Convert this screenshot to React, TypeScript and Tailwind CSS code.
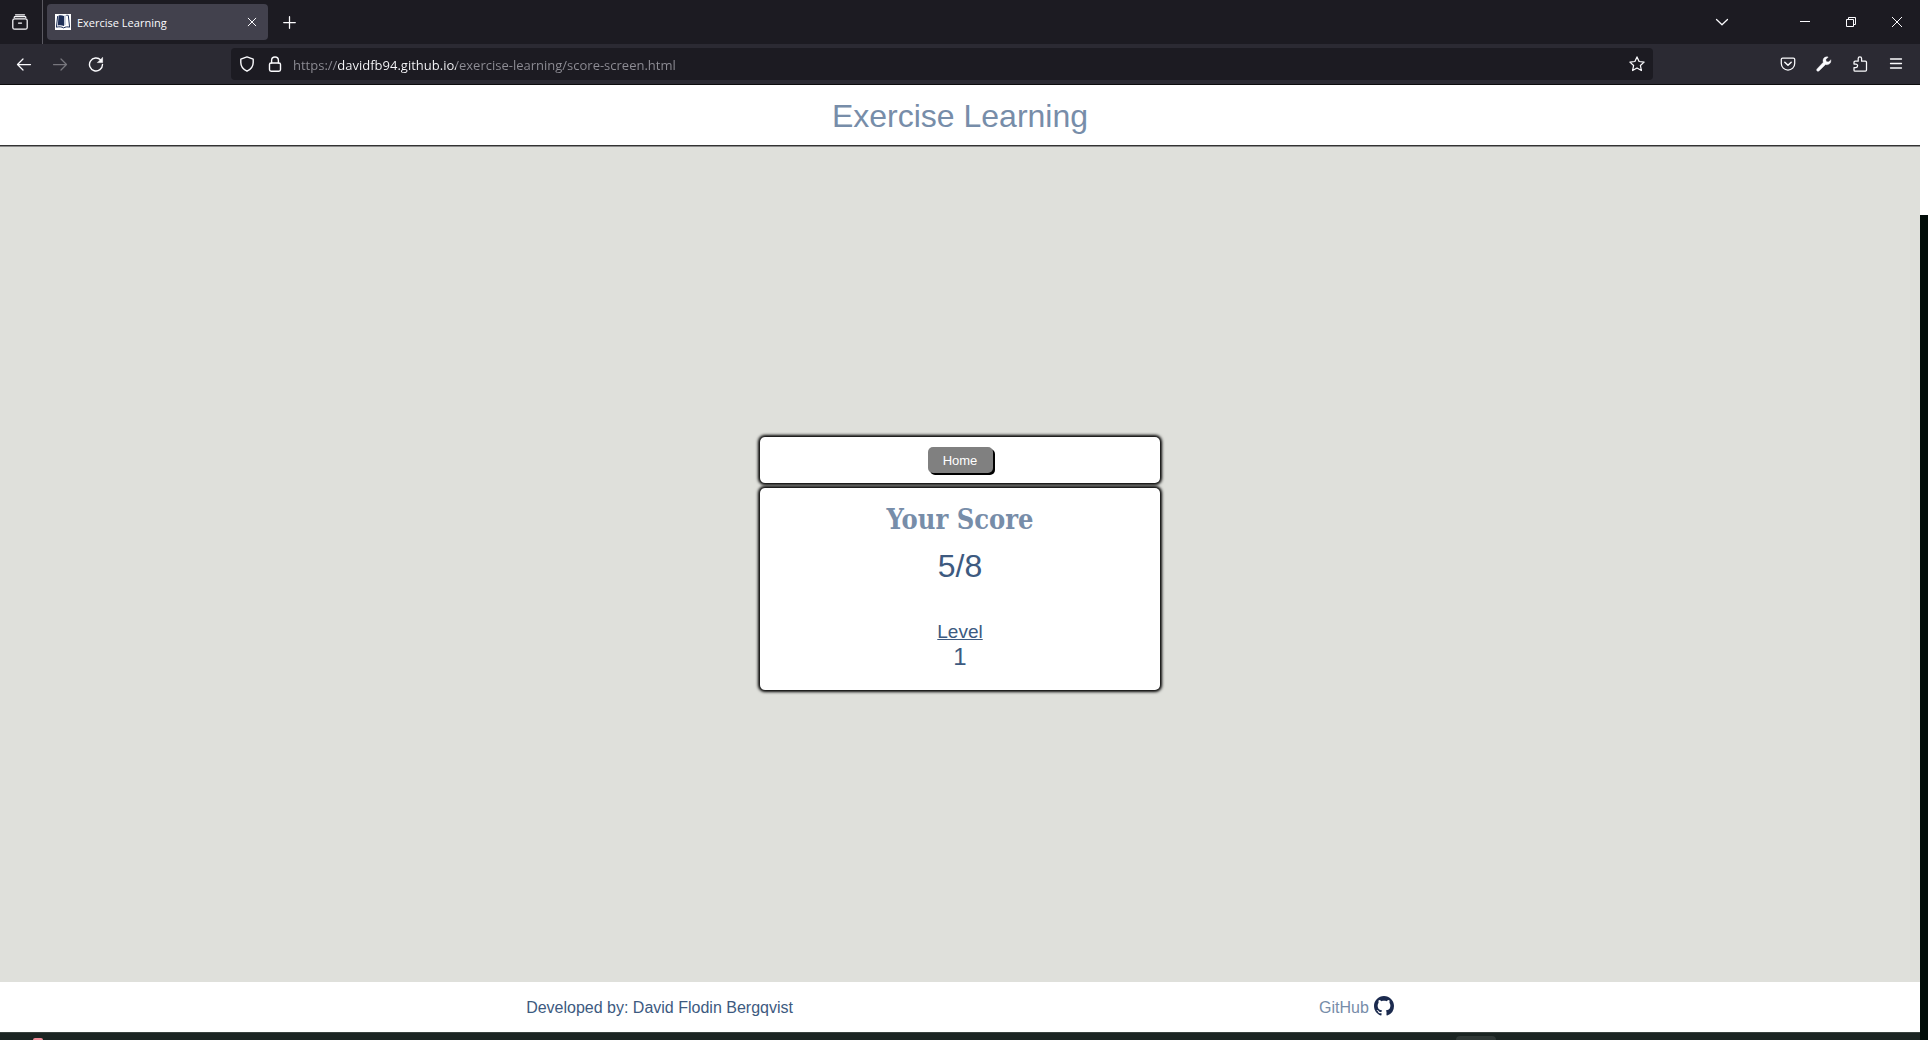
import type { ReactNode } from "react";

type IconProps = { children: ReactNode; className?: string };

function Icon({ children, className = "size-4" }: IconProps) {
  return (
    <svg
      viewBox="0 0 16 16"
      className={`${className} shrink-0`}
      fill="none"
      stroke="currentColor"
      strokeWidth="1.25"
      strokeLinecap="round"
      strokeLinejoin="round"
      aria-hidden="true"
    >
      {children}
    </svg>
  );
}

function ToolButton({ label, children, className = "w-9" }: { label: string; children: ReactNode; className?: string }) {
  return (
    <button type="button" aria-label={label} className={`${className} flex h-8 shrink-0 items-center justify-center`}>
      {children}
    </button>
  );
}

function Favicon() {
  return (
    <svg viewBox="0 0 16 16" className="size-4 shrink-0" aria-hidden="true">
      <path fill="#fff" d="M0 0h16v16H0z" />
      <path fill="#1e2f57" d="M3.600 1.500C5.200 1 7.400 1.100 9 2v10c-1.900-.9-4.300-1-6.200-.5z" />
      <path fill="#c3cad8" d="M9 2c.6-.5 1.200-.8 1.800-.9v10c-.7.100-1.300.4-1.800.9z" />
      <path fill="none" stroke="#1e2f57" strokeWidth="1" d="M11.300 1.300c.8-.1 1.400 0 2 .2l1.300 11.700c-2.200-.6-4.200-.4-5.900.7-2.100-1.200-4.800-1.400-7.300-.7L2.700 2" />
    </svg>
  );
}

function TabBar() {
  return (
    <div className="flex h-11 items-center bg-[#1c1b22]">
      <div className="flex h-full w-[43px] shrink-0 items-center border-r border-[#5b5a62] pl-3">
        <button type="button" aria-label="View recent browsing">
          <Icon>
            <path d="M3.500 .8h9M2.200 3.500C2.200 3 2.600 2.700 3.200 2.700h9.600c.6 0 1 .3 1 .8" />
            <rect x=".8" y="4.800" width="14.400" height="10.400" rx="1.800" />
            <path d="M6.500 9h3" />
          </Icon>
        </button>
      </div>
      <div className="ml-1 flex h-9 w-[221px] items-center gap-1.5 rounded bg-[#42414d] pr-2 pl-2">
        <Favicon />
        <span className="flex-1 pt-0.5 text-[11px] leading-4 whitespace-nowrap">Exercise Learning</span>
        <button type="button" aria-label="Close tab">
          <Icon>
            <path strokeWidth="1" d="M4.200 4.200l7.600 7.600M11.800 4.200l-7.600 7.600" />
          </Icon>
        </button>
      </div>
      <ToolButton label="New tab" className="ml-1 w-9">
        <Icon>
          <path d="M7.500 2.700v11.600M1.700 8.500h11.600" />
        </Icon>
      </ToolButton>
      <div className="flex-1" />
      <ToolButton label="List all tabs" className="mr-[42px] w-9">
        <Icon>
          <path d="M2.500 5.500L8 10.800l5.500-5.300" />
        </Icon>
      </ToolButton>
      <ToolButton label="Minimize" className="w-[46px]">
        <Icon>
          <path strokeLinecap="butt" strokeWidth="1" d="M3 7.500h10" />
        </Icon>
      </ToolButton>
      <ToolButton label="Restore" className="w-[46px]">
        <Icon>
          <path strokeLinecap="butt" strokeLinejoin="miter" strokeWidth="1" d="M3.500 5.500h7v7h-7zM5.500 5.500v-2h7v7h-2" />
        </Icon>
      </ToolButton>
      <ToolButton label="Close" className="w-[46px]">
        <Icon>
          <path strokeLinecap="butt" strokeWidth="1" d="M3 3l10 10M13 3L3 13" />
        </Icon>
      </ToolButton>
    </div>
  );
}

function NavBar() {
  return (
    <div className="flex h-[41px] items-center border-b border-[#0c0c0d] bg-[#2b2a33] pl-1.5">
      <ToolButton label="Back">
        <Icon>
          <path d="M14.500 8.500h-13M7 3L1.500 8.500 7 14" />
        </Icon>
      </ToolButton>
      <ToolButton label="Forward">
        <Icon className="size-4 text-[#77767d]">
          <path d="M1.500 8.500h13M9 3l5.500 5.500L9 14" />
        </Icon>
      </ToolButton>
      <ToolButton label="Reload">
        <Icon>
          <path strokeWidth="1.400" d="M12.800 4.100A6.500 6.500 0 1 0 14.500 8.500" />
          <path fill="currentColor" strokeWidth=".6" d="M14.600 1.700v4.900H9.700z" />
        </Icon>
      </ToolButton>
      <div className="mx-[117px] flex h-8 flex-1 items-center rounded bg-[#1c1b22] pr-2 pl-2">
        <button type="button" aria-label="Tracking protection">
          <Icon>
            <path strokeWidth="1.400" d="M8 .9l6.200 2.300v3.300c0 4-2.600 7-6.200 8.700-3.600-1.700-6.200-4.700-6.200-8.700V3.200z" />
          </Icon>
        </button>
        <button type="button" aria-label="Site information" className="ml-3">
          <Icon>
            <path strokeWidth="1.400" d="M4.600 7V4.400a3.400 3.400 0 0 1 6.800 0V7" />
            <rect strokeWidth="1.400" x="2.500" y="7" width="11" height="8.200" rx="1.600" />
          </Icon>
        </button>
        <input
          aria-label="Address"
          className="ml-2.5 min-w-0 flex-1 bg-[linear-gradient(to_right,#8f8e96_45px,#fbfbfe_45px,#fbfbfe_163px,#8f8e96_163px)] bg-clip-text pt-1 text-[13px] text-transparent outline-none"
          defaultValue="https://davidfb94.github.io/exercise-learning/score-screen.html"
          spellCheck={false}
        />
        <button type="button" aria-label="Bookmark this page">
          <Icon>
            <path d="M8 .9l2.100 4.600 5 .6-3.700 3.400 1 5L8 12l-4.400 2.500 1-5L.9 6.100l5-.6z" />
          </Icon>
        </button>
      </div>
      <div className="flex pr-1.5">
        <ToolButton label="Save to Pocket">
          <Icon>
            <path d="M2.600 2h10.800c.8 0 1.300.5 1.300 1.300v4.300a6.700 6.400 0 0 1-13.400 0V3.300c0-.8.500-1.300 1.300-1.300z" />
            <path strokeWidth="1.500" d="M4.800 6.200L8 9.200l3.200-3" />
          </Icon>
        </ToolButton>
        <ToolButton label="Developer tools">
          <Icon>
            <path
              fill="currentColor"
              strokeWidth=".4"
              d="M14.800 4.200l-2.600 1.900-2-.6-.4-2L12.200 1C9.500.2 7 1.900 7 4.500c0 .7.100 1.200.3 1.700L1 12.900c-1.200 1.400.6 3.200 2 2l6.600-6.400c3.400.9 5.800-1.600 5.200-4.300z"
            />
          </Icon>
        </ToolButton>
        <ToolButton label="Extensions">
          <Icon>
            <path d="M2 14.300v-2.800h1.900a1.700 1.700 0 0 0 0-3.400H2V6.300c0-.7.400-1.100 1.100-1.100h3.100V2.600a1.700 1.700 0 0 1 3.400 0v2.600h3.800c.7 0 1.100.4 1.100 1.100v7.800c0 .7-.4 1.100-1.100 1.100H3c-.6 0-1-.3-1-.9z" />
          </Icon>
        </ToolButton>
        <ToolButton label="Open application menu">
          <Icon>
            <path strokeWidth="1.300" d="M2.500 3h11M2.500 7.500h11M2.500 12h11" />
          </Icon>
        </ToolButton>
      </div>
    </div>
  );
}

function GitHubMark() {
  return (
    <svg viewBox="0 0 16 16" className="size-5" fill="#1b2a4e" aria-hidden="true">
      <path d="M8 0C3.580 0 0 3.580 0 8c0 3.540 2.290 6.530 5.470 7.590.4.070.55-.17.55-.38 0-.19-.01-.82-.01-1.490-2.010.37-2.530-.49-2.690-.94-.09-.23-.48-.94-.82-1.130-.28-.15-.68-.52-.01-.53.63-.01 1.080.58 1.230.82.72 1.210 1.870.87 2.330.66.07-.52.28-.87.51-1.070-1.780-.2-3.640-.89-3.640-3.950 0-.87.31-1.590.82-2.150-.08-.2-.36-1.020.08-2.120 0 0 .67-.21 2.200.82.64-.18 1.320-.27 2-.27s1.360.09 2 .27c1.530-1.040 2.200-.82 2.200-.82.44 1.100.16 1.920.08 2.120.51.56.82 1.270.82 2.150 0 3.070-1.870 3.750-3.650 3.950.29.25.54.73.54 1.480 0 1.070-.01 1.930-.01 2.200 0 .21.15.46.55.38A8.010 8.010 0 0 0 16 8c0-4.420-3.580-8-8-8z" />
    </svg>
  );
}

export default function App() {
  return (
    <div className="flex min-h-screen bg-[#010c08]">
      <div className="flex min-w-0 flex-1 flex-col">
        <div className="font-['Open_Sans','Noto_Sans',sans-serif] text-[#fbfbfe]">
          <TabBar />
          <NavBar />
        </div>
        <div className="flex flex-1 flex-col bg-[#dfe0db] font-['Liberation_Sans',Arial,sans-serif] text-[#3d5a80]">
          <header className="border-b border-[#333] bg-white pt-[7px] pb-[5px] text-center shadow-[0_1px_#8c8c8c]">
            <h1 className="text-[32px] leading-[48px] text-[#778da9]">Exercise Learning</h1>
          </header>
          <main className="flex flex-1 flex-col items-center justify-center gap-[5px] pb-0.5">
            <nav className="flex w-[400px] justify-center rounded-[5px] bg-white py-2.5 shadow-[0_0_3px_2px_#000]">
              <button type="button" className="h-[26px] w-[65px] rounded-[5px] bg-[#808080] pt-0.5 text-[13px] text-white shadow-[2px_2px_#000]">
                Home
              </button>
            </nav>
            <section className="flex w-[400px] flex-col items-center rounded-[5px] bg-white pt-3.5 pb-5 shadow-[0_0_3px_2px_#000]">
              <h2 className="font-['DejaVu_Serif_Condensed','DejaVu_Serif',serif] text-[27px] leading-9 font-bold text-[#778da9]">
                Your Score
              </h2>
              <p className="mt-1.5 text-[32px] leading-[44px]">5/8</p>
              <p className="mt-8 text-[19px] leading-6 underline">Level</p>
              <p className="text-2xl leading-[26px]">1</p>
            </section>
          </main>
          <footer className="flex h-[50px] items-center justify-evenly bg-white pt-0.5">
            <p>Developed by: David Flodin Bergqvist</p>
            <a href="https://github.com/davidfb94" className="flex items-start gap-[5px] text-[#778da9]">
              GitHub
              <GitHubMark />
            </a>
          </footer>
        </div>
        <div className="flex h-2 items-end justify-between overflow-hidden border-t border-[#38413e] bg-[#1b2422] pr-[424px] pl-[33px]">
          <div className="h-[2px] w-2.5 rounded-t-full bg-[#ee8c98]" />
          <div className="h-1 w-10 rounded-t bg-[#303836]" />
        </div>
      </div>
      <div className="h-[215px] w-2 shrink-0 bg-white" />
    </div>
  );
}
